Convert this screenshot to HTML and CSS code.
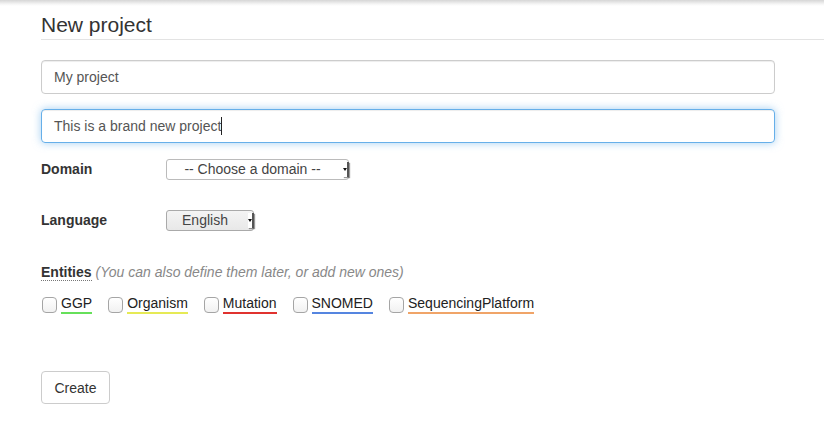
FILE: index.html
```html
<!DOCTYPE html>
<html>
<head>
<meta charset="utf-8">
<link rel="stylesheet" href="styles.css">
</head>
<body>
<div class="topbar"></div>
<main class="page">
  <h1 class="title">New project</h1>
  <form class="form">
    <input class="field" type="text" value="My project">
    <div class="field field-focus">This is a brand new project<span class="caret"></span></div>
    <div class="row">
      <label class="label">Domain</label>
      <span class="select select-domain">-- Choose a domain --<span class="arrow"></span></span>
    </div>
    <div class="row row-lang">
      <label class="label">Language</label>
      <span class="select select-lang">English<span class="arrow"></span></span>
    </div>
    <div class="entities-head">
      <abbr class="label entities-label">Entities</abbr>
      <span class="hint">(You can also define them later, or add new ones)</span>
    </div>
    <div class="entities">
      <label class="ent"><span class="box"></span><span class="ent-name c-green">GGP</span></label>
      <label class="ent"><span class="box"></span><span class="ent-name c-yellow">Organism</span></label>
      <label class="ent"><span class="box"></span><span class="ent-name c-red">Mutation</span></label>
      <label class="ent"><span class="box"></span><span class="ent-name c-blue">SNOMED</span></label>
      <label class="ent"><span class="box"></span><span class="ent-name c-orange">SequencingPlatform</span></label>
    </div>
    <button class="btn" type="button">Create</button>
  </form>
</main>
</body>
</html>
```

FILE: styles.css
```css
html, body {
  margin: 0;
  padding: 0;
  background: #fff;
}
body {
  font-family: "Liberation Sans", Arial, sans-serif;
  font-size: 14px;
  color: #333;
  overflow: hidden;
}
.topbar {
  height: 6px;
  background: linear-gradient(#d6d6d6, #f6f6f6 70%, #fff);
}
.page {
  padding-left: 41px;
}
.title {
  margin: 0;
  padding: 6px 0 1px;
  font-size: 21px;
  font-weight: normal;
  line-height: 26px;
  color: #333;
  border-bottom: 1px solid #e3e3e3;
}
.form {
  width: 734px;
  padding-top: 20px;
  display: flex;
  flex-direction: column;
}
.field {
  box-sizing: border-box;
  width: 734px;
  height: 34px;
  margin: 0 0 15px;
  padding: 0 12px;
  border: 1px solid #ccc;
  border-radius: 4px;
  font-family: "Liberation Sans", Arial, sans-serif;
  font-size: 14px;
  color: #555;
  line-height: 32px;
  box-shadow: inset 0 1px 1px rgba(0,0,0,0.075);
  outline: none;
}
.field-focus {
  border-color: #66afe9;
  box-shadow: inset 0 1px 1px rgba(0,0,0,0.075), 0 0 8px rgba(102,175,233,0.6);
  margin-bottom: 15px;
}
.caret {
  display: inline-block;
  width: 1px;
  height: 18px;
  background: #222;
  vertical-align: -4px;
}
.row {
  display: flex;
  align-items: center;
  height: 22px;
}
.row-lang {
  margin-top: 29px;
}
.label {
  width: 125px;
  font-weight: bold;
  color: #333;
}
.select {
  position: relative;
  box-sizing: border-box;
  height: 21px;
  border: 1px solid #bbb;
  border-radius: 3px;
  background: #fff;
  color: #444;
  font-size: 14px;
  line-height: 19px;
  text-align: center;
  padding-right: 10px;
}
.select-domain {
  width: 183px;
}
.select-lang {
  width: 88px;
  background: linear-gradient(#f4f4f4, #e8e8e8);
  border-color: #aaa;
}
.arrow {
  position: absolute;
  right: -1px;
  top: 2px;
  width: 4px;
  height: 15px;
  background: #fff;
  border-right: 2px solid #555;
  box-shadow: 1px 1px 1px rgba(0,0,0,0.4);
}
.arrow::after {
  content: "";
  position: absolute;
  left: 0;
  top: 6px;
  border-left: 2px solid transparent;
  border-right: 2px solid transparent;
  border-top: 3px solid #111;
}
.entities-head {
  margin-top: 33px;
  display: flex;
  align-items: baseline;
  height: 20px;
}
.entities-label {
  width: auto;
  text-decoration: none;
  border-bottom: 1px dotted #777;
  margin-right: 4px;
}
.hint {
  font-style: italic;
  color: #888;
}
.entities {
  display: flex;
  gap: 15px;
  margin-top: 11px;
  height: 24px;
}
.ent {
  display: flex;
  align-items: flex-start;
}
.box {
  box-sizing: border-box;
  width: 15px;
  height: 16px;
  margin: 2px 4px 0 1px;
  border: 1px solid #a5a5a5;
  border-radius: 4px;
  background: linear-gradient(#fff, #f1f1f1);
}
.ent-name {
  color: #222;
  font-size: 14px;
  line-height: 16px;
  padding-bottom: 1px;
  border-bottom: 2px solid transparent;
}
.c-green { border-bottom-color: #66e05a; }
.c-yellow { border-bottom-color: #e6ea55; }
.c-red { border-bottom-color: #e0322f; }
.c-blue { border-bottom-color: #5585e0; }
.c-orange { border-bottom-color: #f0a468; }
.btn {
  align-self: flex-start;
  margin-top: 52px;
  width: 69px;
  height: 33px;
  border: 1px solid #ccc;
  border-radius: 4px;
  background: #fff;
  color: #333;
  font-family: "Liberation Sans", Arial, sans-serif;
  font-size: 14px;
  padding: 0;
}
```
